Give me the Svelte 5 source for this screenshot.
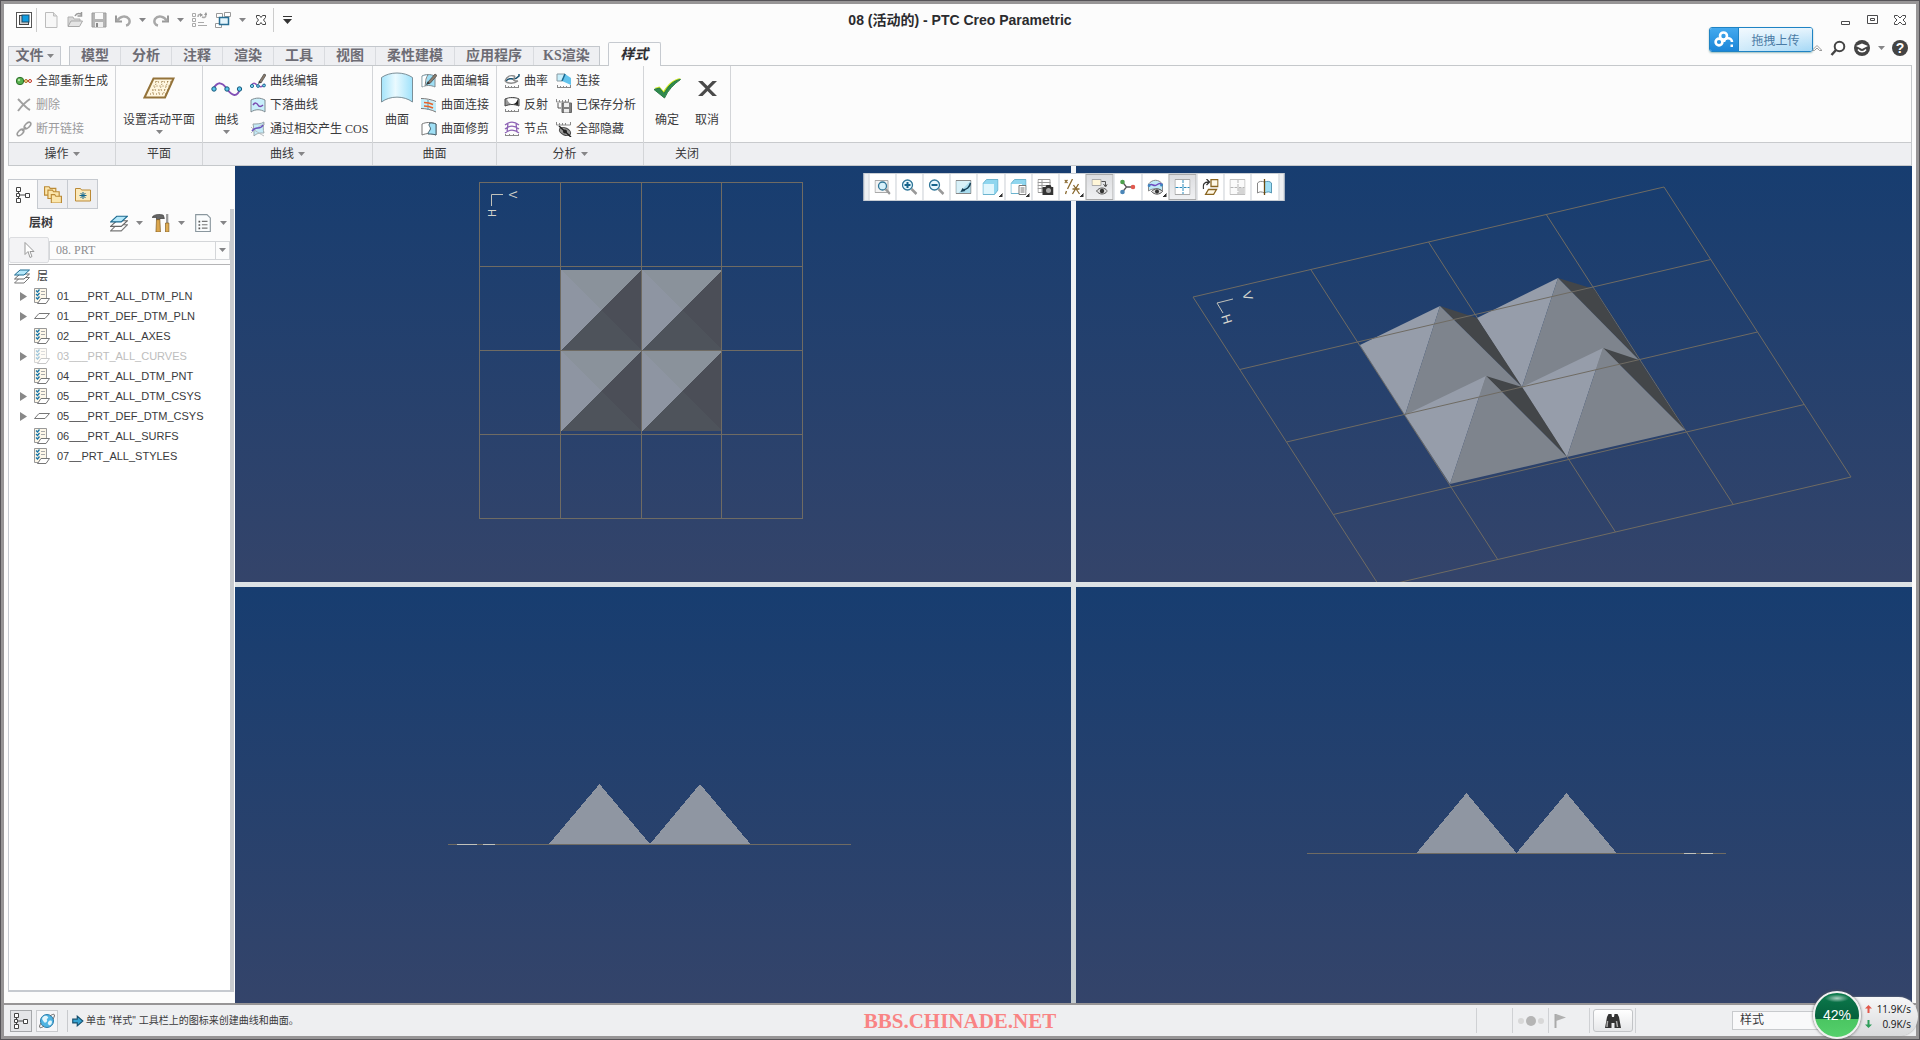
<script>
  const icons = {
    app: '<rect x=".5" y=".5" width="15" height="15" fill="#fff" stroke="#555"/><rect x="3.5" y="3.5" width="9" height="9" fill="#cfcfcf" stroke="#444"/><rect x="6" y="3" width="7" height="7" fill="#0e9be0" stroke="#1a4a66"/>',
    doc: '<path d="M2.500.5h8l3.500 3.500v11.500h-11.500z" fill="#f7f7f7" stroke="#bcbcbc"/><path d="M10.500.5v3.500h3.500" fill="#ddd" stroke="#bcbcbc"/>',
    open: '<path d="M1 14V5h5l1 2h6v2" fill="#d8d8d8" stroke="#b0b0b0"/><path d="M1 14.500 4 9h11.500L12.500 14.500z" fill="#e4e4e4" stroke="#a8a8a8"/><path d="M8 4c1-2 3-3 6-2M14.500 0v4h-4" fill="none" stroke="#999" stroke-width="1.500"/>',
    save: '<path d="M1 1h14v14H1z" fill="#b4b4b4" stroke="#9c9c9c"/><path d="M4 1h8v6H4z" fill="#fafafa"/><path d="M4 10h8v5H4z" fill="#efefef"/><path d="M5 11h2v4H5z" fill="#888"/>',
    undo: '<path d="M1 3.500v6h6" fill="none" stroke="#999" stroke-width="2"/><path d="M2 9C5 4 11 3 14 7c1.500 3 0 6-3 6.500" fill="none" stroke="#a8a8a8" stroke-width="2.500"/>',
    redo: '<path d="M15 3.500v6H9" fill="none" stroke="#999" stroke-width="2"/><path d="M14 9C11 4 5 3 2 7c-1.500 3 0 6 3 6.500" fill="none" stroke="#a8a8a8" stroke-width="2.500"/>',
    regen: '<g fill="none" stroke="#aaa"><path d="M1.500 1.500h3v3h-3zM1.500 6.500h3v3h-3zM1.500 11.500h3v3h-3zM7 10.500h6M7 13.500h9"/><path d="M7 5c0-3 2-3 4-2M15 2c0 4-2 4-4 3" stroke-width="1.500"/></g><path d="M9 1v4l3-2zM13 3l2-3 1.500 3z" fill="#999"/>',
    wins: '<g stroke="#999" fill="#fff"><path d="M1.500 1.500h6v4h-6zM9.500.5h6v4h-6zM.5 11.500h6v4h-6z"/></g><path d="M4.500 5.500h9v7h-9z" fill="#e4f5fc" stroke="#2a6f95" stroke-width="1.500"/>',
    closex: '<path d="M3.500 3.500h3l1.500 2 1.500-2h3v2L10.500 8l2 2.500v2h-3L8 10.500l-1.500 2h-3v-2l2-2.500-2-2.500z" fill="#fff" stroke="#444"/>',
    regenAll: '<path d="M7 8h8" stroke="#888"/><circle cx="4" cy="8" r="3.700" fill="#57b04e" stroke="#2e6e2a"/><circle cx="3" cy="7" r="1.200" fill="#b7e6a8"/><circle cx="10" cy="8" r="1.500" fill="#fbe3a0" stroke="#b06a20"/><circle cx="14" cy="8" r="1.500" fill="#fff" stroke="#c03020"/>',
    del: '<path d="M2 2c4 4 8 9 12 11M14 2C9 5 5 10 2 14" fill="none" stroke="#a0a0a0" stroke-width="2"/>',
    unlink: '<g fill="none" stroke="#9c9c9c" stroke-width="1.600"><ellipse cx="11.500" cy="4.500" rx="4" ry="2.200" transform="rotate(-45 11.500 4.500)"/><ellipse cx="4.500" cy="11.500" rx="4" ry="2.200" transform="rotate(-45 4.500 11.500)"/><path d="m6 10 4-4"/></g>',
    curveEdit: '<path d="M1 13c2-4 4-3 6-1s5 3 8-1" fill="none" stroke="#8a56b8" stroke-width="1.500"/><circle cx="2" cy="13" r="1.600" fill="#7fd0ee" stroke="#1f6f96"/><circle cx="8" cy="13" r="1.400" fill="#7fd0ee" stroke="#1f6f96"/><circle cx="14" cy="12.500" r="1.400" fill="#7fd0ee" stroke="#1f6f96"/><path d="M9 9 14 1l2 1-5 8z" fill="#8b7c6c" stroke="#444" stroke-width=".7"/><path d="M8 11l1-3 2 1.500z" fill="#333"/>',
    drop: '<path d="M1 3c5-2.500 9-2.500 14 0v12c-4-3-10-3-14 0z" fill="#c9effb" stroke="#7e8a90"/><path d="M3 8c2-3 4-2 5 0s3 2 5 0" fill="none" stroke="#7b4bb0" stroke-width="1.500"/>',
    intersect: '<path d="M3 3c4 0 8 0 11-2-1 4-1 8 0 11-4 0-7 0-10 3 0-4 0-8-1-12z" fill="#c4ebf8" stroke="#9aa6ab"/><path d="M1 6c3 3 6 5 13 9M1 12C4 9 10 4 15 3" fill="none" stroke="#b4babd"/><path d="M2 10c2-3 4-3 6-3s4-1 5-3" fill="none" stroke="#6a52c0" stroke-width="1.500"/>',
    surfEdit: '<path d="M1 3c4-2 8-2 13 0v11c-4-2-9-2-13 0z" fill="#9fdff5" stroke="#7e8a90"/><path d="M1.500 3.500c2-1 3-1 5-1L4 13l-2.500.5z" fill="#fff"/><path d="M4 13C5 9 4 6 7 2" fill="none" stroke="#777"/><path d="M7 9 14 1l2 1.500-7 8z" fill="#8b7c6c" stroke="#444" stroke-width=".7"/><path d="M5 12l1.500-3.500L9 10.500z" fill="#333"/>',
    surfConn: '<path d="M0 2c5 0 10 1 15 4v9C10 12 5 11 0 11z" fill="#c3edf9"/><path d="M0 1.500c5 0 10 1 15 3M0 11.500c5 0 10 1 15 3.500" fill="none" stroke="#777"/><path d="M7 3v10" stroke="#5a98b4"/><path d="M3 5.500c3 0 6 .5 9 2M3 9c3 0 6 .5 9 2" fill="none" stroke="#e8632a" stroke-width="1.500"/>',
    surfTrim: '<path d="M1 3c4-2 9-2 14 0v11c-5-2-9-2-14 0z" fill="#fff" stroke="#777"/><path d="M9 2c-3 3 2 4 0 7-1 2-2 2-2 4 3 0 5 0 8 1V3C13 2 11 2 9 2z" fill="#9fdff5" stroke="#47606c"/>',
    curvature: '<path d="M2 8C6 2 9 10 15 3V1" fill="none" stroke="#17506f" stroke-width="1.500"/><path d="M1 8c2-5 6-6 9-5s-5 5 4 5M1 8c3 3 9 3 13 0" fill="none" stroke="#8a8a8a" stroke-width="1.500"/><path d="M1 14.500h14M1.500 12v3M4.500 13v2M7.500 13v2M10.500 13v2M14.500 12v3" stroke="#888"/>',
    reflect: '<path d="M1 2c5-2 10-2 14 0v7c-5-2-9-2-14 0z" fill="#999" stroke="#444"/><path d="M3 2c1 3 3 5 6 5 3 0 4-3 5-5-4-1-8-1-11 0z" fill="#fff"/><path d="M9 7c2 0 4-2 5-5v6z" fill="#222"/><path d="M1 14.500h14M1.500 12v3M4.500 13v2M7.500 13v2M10.500 13v2M14.500 12v3" stroke="#888"/>',
    node: '<path d="M1 4c5-4 9-4 14 0M1 8c5-4 9-4 14 0M1 12c5-4 9-4 14 0M4 2l-1 9M12 2l1 9" fill="none" stroke="#8e63b5" stroke-width="1.300"/><path d="M1 14.500h14M1.500 13v2M5.500 13v2M9.500 13v2M14.500 13v2" stroke="#888"/>',
    connect: '<path d="M1 1h8L6 8H1z" fill="#c9effb" stroke="#8a9aa2"/><path d="M9 1l6 4v7l-9-4z" fill="#62c3ec"/><path d="M9 1 6 8" stroke="#1b6a92" stroke-width="1.500"/><path d="M1 14.500h14M1.500 12v3M4.500 13v2M7.500 13v2M10.500 13v2M14.500 12v3" stroke="#888"/>',
    saved: '<path d="M.5 5h12M.5 2v3M3.500 3v2M6.500 3v2M9.500 3v2M12.500 2v3" stroke="#888"/><path d="M2 6v5h3" fill="none" stroke="#555"/><path d="M6 6h9.500v9.500H6z" fill="#808080" stroke="#666"/><path d="M8 6h5v4H8zM8 12h5v3.500H8z" fill="#eee"/>',
    hideAll: '<path d="M.5 4h14M.5 1v3M3.500 2v2M6.500 2v2M9.500 2v2M14.500 1v3" stroke="#888"/><ellipse cx="9" cy="10.500" rx="6" ry="3.500" fill="#999" stroke="#444" transform="rotate(25 9 10.500)"/><circle cx="9" cy="10.500" r="2" fill="#222"/><path d="m3 5 12 11" stroke="#222" stroke-width="1.500"/>',
    plane: '<path d="M10.500 6.500h20L22 25.500H1.500z" fill="#fff6e0" stroke="#94733a" stroke-width="2"/><path d="M12 10h16M10.500 14h16M9 18h16M7 22h16M14 9 9 23M20 9l-5 14M25 9l-5 14" stroke="#94733a" stroke-dasharray="1 2" fill="none"/>',
    curve: '<path d="M2 17C7 9 11 10 16 17s10 9 13 0" fill="none" stroke="#8350b6" stroke-width="2"/><g fill="#5cc4ea" stroke="#17597b"><circle cx="3" cy="17" r="2.200"/><circle cx="16" cy="17" r="2.200"/><circle cx="28.500" cy="17" r="2.200"/></g>',
    surface: '<defs><linearGradient id="sg"><stop offset="0" stop-color="#a4e4fb"/><stop offset=".45" stop-color="#eafaff"/><stop offset="1" stop-color="#9fe2fb"/></linearGradient></defs><path d="M.5 5.500C9-.5 23-.5 31.500 5.500V30C23 23.500 9 23.500.5 30z" fill="url(#sg)" stroke="#7b8f98"/>',
    ok: '<path d="M3.500 16 8.500 14.500 12.500 19C17 12 22 7 30 6 23 11 17 18 13.500 25.500z" fill="#c9e51f"/><path d="M3 17.500 8.500 16 13 21.500C17 14 22 8.500 29.500 7.500 23 12 17 18 13.500 26z" fill="#2f8a4e" stroke="#2a7a46"/>',
    cancel: '<path d="M7 9h4.500l5 5 5-5H26l-7.500 7.500L26 24h-4.500l-5-5-5 5H7l7.500-7.500z" fill="#4a4a4a"/>',
    tree: '<g fill="#fff" stroke="#444"><path d="M3.500 3v10M3.500 8h8" /><path d="M1.500.5h4v4h-4zM1.500 6.500h3v3h-3zM10.500 6.500h4v4h-4zM1.500 11.500h4v4h-4z"/></g>',
    folders: '<g fill="#fbe6ac" stroke="#bb8a36"><path d="M.5 1.500h4l1 1.500h5v6h-10z"/><path d="M3.500 4.500h4l1 1.500h5v6h-10z"/><path d="M6.500 8.500h3l1 1.500h5v6h-9z"/></g>',
    folderStar: '<path d="M.5 2.500h5l1 1.500h9v11H.5z" fill="#fbe9bb" stroke="#bb8a36"/><path d="M8 6v7M4.500 9.500h7M5.500 7l5 5M10.500 7l-5 5" stroke="#10658f"/>',
    layers: '<path d="M6 9.500h9.500L10 15H.500z" fill="#fff" stroke="#777"/><path d="M6 6h9.500L10 11H.500z" fill="#fff" stroke="#666"/><path d="M6 2h9.500L10 7H.500z" fill="#b5e8fa" stroke="#1d6a90"/>',
    tools: '<path d="M0 3c2-3 7-3 10-2l1 3H7v1H4V3z" fill="#666" stroke="#333" stroke-width=".6"/><path d="M4 5h3l.5 11h-4z" fill="#dba64d" stroke="#7d5a20" stroke-width=".6"/><path d="M12.500 0h2v8h-2z" fill="#999"/><path d="M12 8h3v8h-3z" fill="#e0ad52" stroke="#7d5a20" stroke-width=".6"/>',
    list: '<path d="M1.500.5h10l3 3v12h-13z" fill="#fafcfd" stroke="#8a979e"/><path d="M7 6.500h5M7 9.500h5M7 12.500h5" stroke="#777"/><path d="M4 6h1.500v1.500H4zM4 9h1.500v1.500H4zM4 12h1.500v1.500H4z" fill="#555"/>',
    cursor: '<path d="M4 .5v12l3-3 2 6 2-1-2-5h4z" fill="#fff" stroke="#999"/>',
    layer: '<path d="M.5.5h12v14H.5z" fill="#fdf7e8" stroke="#999"/><path d="M7 3.500h4M7 6.500h4" stroke="#aaa"/><path d="m2 2.500 1.500 1.500 2-2.500M2 6l1.500 1.500 2-2.500M2 9.500 3.500 11l2-2.500" fill="none" stroke="#1473a6" stroke-width="1.300"/><path d="M7 10.500h8.500L12 15.500H3.500z" fill="#fff" stroke="#777"/>',
    flat: '<path d="M5 5.500h10.500L11 10.500H.500z" fill="#fff" stroke="#777"/>',
    refit: '<path d="M.5 1.500h13v12H.5z" fill="#f3f3f3" stroke="#aaa"/><circle cx="8" cy="7" r="4" fill="#d7f1fb" stroke="#2f7698" stroke-width="1.300"/><path d="m11 10 4.500 5" stroke="#999" stroke-width="2.500"/>',
    zin: '<circle cx="6" cy="6" r="5" fill="#e8f8fe" stroke="#2f7698" stroke-width="1.300"/><path d="M3 6h6M6 3v6" stroke="#17648c" stroke-width="2"/><path d="m10 10 5 5" stroke="#999" stroke-width="2.500"/>',
    zout: '<circle cx="6" cy="6" r="5" fill="#e8f8fe" stroke="#2f7698" stroke-width="1.300"/><path d="M3 6h6" stroke="#17648c" stroke-width="2"/><path d="m10 10 5 5" stroke="#999" stroke-width="2.500"/>',
    repaint: '<path d="M.5 1.500h15v13H.5z" fill="#a9dcee" stroke="#888"/><path d="M1 2h14L3 14H1z" fill="#d9f1f9"/><path d="M15 4c-1 5-4 6-7 7" fill="none" stroke="#173f56" stroke-width="1.500"/><path d="M5 13l2-4 3 3z" fill="#173f56"/>',
    cube: '<path d="M.5 4.500 4 .5h11.500V11L12 15.500H.5z" fill="#8fd6ef" stroke="#6cb4cf"/><path d="M1 5h10.500v10H1z" fill="#e0f6fd"/>',
    cubeList: '<path d="M.5 4.500 4 .5h11.500V11L12 14.500H.5z" fill="#8fd6ef" stroke="#6cb4cf"/><path d="M1 5h10.500v9H1z" fill="#fff"/><path d="M8.500 6.500h7v9h-7z" fill="#fff" stroke="#777"/><path d="M10 9h4M10 11h4M10 13h4" stroke="#777"/>',
    camera: '<path d="M.5.5h12v13H.5z" fill="#fff" stroke="#999"/><path d="M0 3.500h13M0 6.500h13M0 9.500h13M4.500 0v13" stroke="#999"/><path d="M5 8h3l1-2h4l1 2h2v8H5z" fill="#333"/><circle cx="11" cy="11.500" r="2.500" fill="#aaa"/>',
    datum: '<path d="M0 1l3 3M3 1 0 4M8 0 3 10M2 12l-1 3M9 6l6 9M14 5 8 15M8 10h7" stroke="#8a6a30" stroke-width="1.300"/>',
    annot: '<path d="M.5.5h9v6h-9z" fill="#fff6d8" stroke="#aaa"/><path d="M10 2.500h4V7M12 5l2 3 2-3" fill="none" stroke="#555"/><path d="M5 12c3-4 8-4 11 0-3 4-8 4-11 0z" fill="#ddd" stroke="#555"/><circle cx="10.500" cy="12" r="2.200" fill="#333"/>',
    spin: '<path d="M3 3l4 5-4 5M7 8h6" fill="none" stroke="#555" stroke-width="1.300"/><circle cx="3" cy="3" r="2.300" fill="#4da04d"/><circle cx="3" cy="13" r="2.300" fill="#4a86b8"/><circle cx="13.500" cy="8" r="2.300" fill="#e05a50"/>',
    styleDisp: '<path d="M1 5c4-5 10-5 14 0v7c-4-3-10-3-14 0z" fill="#bfe9f7" stroke="#888"/><path d="M1 7c3-4 5 1 8-1s4-2 6 0" fill="none" stroke="#6f4bc0" stroke-width="1.500"/><circle cx="1.500" cy="6.500" r="1.500" fill="#3f86c0"/><circle cx="14" cy="6" r="1.500" fill="#3f86c0"/><path d="M4 12.500c3-3.500 8-3.500 11 0-3 3.500-8 3.500-11 0z" fill="#ddd" stroke="#555"/><circle cx="9.500" cy="12.500" r="2" fill="#333"/>',
    four: '<path d="M.5.5h15v15H.5z" fill="#fff" stroke="#a8a8a8"/><path d="M8.500 1v14M1 8.500h14" stroke="#2a8abb" stroke-dasharray="3 1"/>',
    orient: '<path d="M8.500.5h7v7h-7zM6 10.500h8l-3 5H3z" fill="#fff8e6" stroke="#8a6520" stroke-width="1.300"/><path d="M1 10C0 5 2 3 6 3M4 0l3 3-3 3" fill="none" stroke="#333" stroke-width="1.300"/>',
    fourGrey: '<path d="M.5.5h15v15H.5z" fill="#fafafa" stroke="#c0c0c0"/><path d="M9 9h6v6H9z" fill="#d5d5d5"/><path d="M8.500 1v14M1 8.500h14" stroke="#b5b5b5" stroke-dasharray="3 1"/>',
    section: '<path d="M8 3C5 2 3 2 1 4v10c2-1.500 4-1.500 7 0z" fill="#fff" stroke="#888"/><path d="M8 3c3-1 5-1 7 1v10c-2-1.500-4-1.500-7 0z" fill="#9fdff5" stroke="#5a98b4"/><path d="M8 0v16" stroke="#6a4a10" stroke-width="1.300"/>',
    search: '<circle cx="9.500" cy="6.500" r="4.800" fill="#fff" stroke="#444" stroke-width="2"/><path d="M6 10 1.500 15" stroke="#444" stroke-width="2.500"/>',
    learn: '<circle cx="8" cy="8" r="8" fill="#444"/><path d="m2 6 6-2.500L14 6 8 9z" fill="#fff"/><path d="M4 9.500c2 3 6 3 8 0" fill="none" stroke="#fff" stroke-width="1.500"/>',
    globe: '<circle cx="8" cy="8" r="6.500" fill="#4fb4e2" stroke="#2a7cab"/><path d="M4 4c2-2 4-1 5 0s-2 2-1 3-2 4-3 2-3-3-1-5zM10 8c2-1 3 0 3 1s-1 4-3 3-1-3 0-4z" fill="#e3f5fb"/><path d="M11 3c4-3 6-2 3 3M5 13c-4 3-6 2-3-3" fill="none" stroke="#666"/>',
    arrow: '<path d="M1 5.500h6V1.500l7.500 6.500L7 14.500v-4H1z" fill="#36a4d2" stroke="#17506f" stroke-width="1.500"/>',
    flag: '<path d="M2.500 1v14" stroke="#aaa" stroke-width="2"/><path d="M3 1l10 3.500L3 8z" fill="#b0b0b0"/>',
    binoc: '<path d="M2 4 3.500 1h3L7 4h2l.5-3h3L14 4l2 11h-6.500V10h-3v5H0z" fill="#333"/><path d="M2.500 8 2 14M11.500 8l1 6" stroke="#aaa" stroke-width="1.500"/>',
    cloud: '<g fill="none" stroke="#fff" stroke-width="2.600"><circle cx="5" cy="11" r="3.400"/><circle cx="9.500" cy="5" r="3.500"/><path d="M10 11c0-5 8-5 8 0"/></g><path d="M16.500 13.500h2.500v2.500h-2.500z" fill="#fff"/>'
  };

  const tabs = ['模型', '分析', '注释', '渲染', '工具', '视图', '柔性建模', '应用程序', 'KS渲染'];
  const groups = [
    { title: '操作', menu: true, kind: 'ops', big: [], cols: [[['regenAll', '全部重新生成'], ['del', '删除', true], ['unlink', '断开链接', true]]] },
    { title: '平面', kind: 'plane', big: [['plane', '设置活动平面', true]], cols: [] },
    { title: '曲线', menu: true, kind: 'curve', big: [['curve', '曲线', true]], cols: [[['curveEdit', '曲线编辑'], ['drop', '下落曲线'], ['intersect', '通过相交产生 COS']]] },
    { title: '曲面', kind: 'surf', big: [['surface', '曲面']], cols: [[['surfEdit', '曲面编辑'], ['surfConn', '曲面连接'], ['surfTrim', '曲面修剪']]] },
    { title: '分析', menu: true, kind: 'anal', big: [], cols: [[['curvature', '曲率'], ['reflect', '反射'], ['node', '节点']], [['connect', '连接'], ['saved', '已保存分析'], ['hideAll', '全部隐藏']]] },
    { title: '关闭', kind: 'close', big: [['ok', '确定'], ['cancel', '取消']], cols: [] }
  ];
  const layers = [
    ['01___PRT_ALL_DTM_PLN', 'layer', true],
    ['01___PRT_DEF_DTM_PLN', 'flat', true],
    ['02___PRT_ALL_AXES', 'layer', false],
    ['03___PRT_ALL_CURVES', 'layer', true, true],
    ['04___PRT_ALL_DTM_PNT', 'layer', false],
    ['05___PRT_ALL_DTM_CSYS', 'layer', true],
    ['05___PRT_DEF_DTM_CSYS', 'flat', true],
    ['06___PRT_ALL_SURFS', 'layer', false],
    ['07__PRT_ALL_STYLES', 'layer', false]
  ];
  const viewTools = [
    ['refit', '重新调整'], ['zin', '放大'], ['zout', '缩小'], ['repaint', '重画'], ['cube', '显示样式', 'm'],
    ['cubeList', '已保存方向', 'm'], ['camera', '视图管理器'], ['datum', '基准显示', 'm'], ['annot', '注释显示', 'on'],
    ['spin', '旋转中心'], ['styleDisp', '样式显示', 'm'], ['four', '显示所有视图', 'on'], ['orient', '活动平面方向'],
    ['fourGrey', '下一个视图'], ['section', '截面']
  ];

  // Top view: four square pyramids of 80 units
  const squares = [[326, 104], [407, 104], [326, 185], [407, 185]];

  // Oblique view: grid corners and pyramid vertices [nw, ne, sw, se, apex]
  const A = [117, 131], U = [471, -110], V = [187, 290];
  const at = (u, v) => [A[0] + U[0] * u + V[0] * v, A[1] + U[1] * u + V[1] * v];
  const steps = [0, 0.25, 0.5, 0.75, 1];
  const seg = (p, q) => `M${p[0]} ${p[1]}L${q[0]} ${q[1]}`;
  const rowLines = steps.map((s) => seg(at(0, s), at(1, s)));
  const colLines = steps.map((s) => seg(at(s, 0), at(s, 1)));
  const p = {
    a: [284, 179], b: [401, 152], c: [518, 123], d: [329, 249], e: [446, 221], f: [563, 194],
    g: [374, 318], h: [491, 291], i: [609, 264], s: [364, 140], t: [482, 112], u: [410, 210], v: [527, 182]
  };
  const solids = ['bcef t', 'abde s', 'efhi v', 'degh u'].map((k) => {
    const [nw, ne, sw, se] = k.slice(0, 4).split('').map((n) => p[n]);
    const top = p[k[5]];
    const poly = (...q) => q.map((n) => n.join(',')).join(' ');
    return { left: poly(nw, top, sw), front: poly(sw, top, se), right: poly(ne, top, se) };
  });
</script>

{#snippet icon(name, cls = 'i16')}
  <svg class={cls} viewBox={cls === 'i32' ? '0 0 32 32' : '0 0 16 16'} aria-hidden="true">{@html icons[name]}</svg>
{/snippet}

{#snippet caret()}
  <svg class="caret" viewBox="0 0 7 4" aria-hidden="true"><path d="M0 0h7L3.500 4z" /></svg>
{/snippet}

<div class="window">
  <header>
    <div class="lead">
      <div class="qat">
        <button class="app" aria-label="应用程序">{@render icon('app')}</button>
        <div class="quick">
          <button aria-label="新建">{@render icon('doc')}</button>
          <button aria-label="打开">{@render icon('open')}</button>
          <button aria-label="保存">{@render icon('save')}</button>
          <button aria-label="撤消">{@render icon('undo')}</button>
          <button class="mini" aria-label="撤消列表">{@render caret()}</button>
          <button aria-label="重做">{@render icon('redo')}</button>
          <button class="mini" aria-label="重做列表">{@render caret()}</button>
          <button aria-label="重新生成">{@render icon('regen')}</button>
          <button aria-label="窗口">{@render icon('wins')}</button>
          <button class="mini" aria-label="窗口列表">{@render caret()}</button>
          <button aria-label="关闭">{@render icon('closex')}</button>
        </div>
        <button class="custom" aria-label="自定义快速访问工具栏">
          <svg viewBox="0 0 9 8" aria-hidden="true"><path d="M0 .5h9" stroke="#333" /><path d="M0 3h9L4.500 8z" fill="#333" /></svg>
        </button>
      </div>
      <nav class="tabs">
        <button class="file">文件{@render caret()}</button>
        <div class="strip">
          {#each tabs as t}<button>{t}</button>{/each}
        </div>
        <button class="active">样式</button>
      </nav>
    </div>
    <h1>08 (活动的) - PTC Creo Parametric</h1>
    <div class="trail">
      <div class="controls">
        <button aria-label="最小化"><svg viewBox="0 0 12 12"><path d="M1.500 7.500h8v3h-8z" /></svg></button>
        <button aria-label="最大化"><svg viewBox="0 0 12 12"><path d="M.5 1.500h10v8H.5zM3.500 4.500h4v2h-4z" /></svg></button>
        <button aria-label="关闭窗口"><svg viewBox="0 0 12 12"><path d="M.5 1.500h3L6 4l2.500-2.500h3v2L9 6l2.500 2.500v2h-3L6 8l-2.500 2.500h-3v-2L3 6 .5 3.500z" /></svg></button>
      </div>
      <div class="helpers">
        <button class="chev" aria-label="折叠功能区"><svg viewBox="1 0 10 8"><path d="M1 6.500 6 1.500l5 5H8.500L6 4 3.500 6.500z" /></svg></button>
        <button aria-label="搜索">{@render icon('search')}</button>
        <button aria-label="学习">{@render icon('learn')}</button>
        <button class="mini" aria-label="学习列表">{@render caret()}</button>
        <button class="help" aria-label="帮助">?</button>
      </div>
      <button class="upload">
        <span class="cloud"><svg viewBox="0 0 20 18" aria-hidden="true">{@html icons.cloud}</svg></span>
        <span class="uptext">拖拽上传</span>
      </button>
    </div>
  </header>

  <section class="ribbon">
    {#each groups as g}
      <div class="group {g.kind}">
        <div class="tools">
          {#each g.big as [ic, label, menu]}
            <button class="big">
              {@render icon(ic, 'i32')}
              <span>{label}</span>
              {#if menu}{@render caret()}{/if}
            </button>
          {/each}
          {#each g.cols as col}
            <div class="col">
              {#each col as [ic, label, off]}
                <button class="small" disabled={off}>{@render icon(ic)}<span>{label}</span></button>
              {/each}
            </div>
          {/each}
        </div>
        <div class="caption">{g.title}{#if g.menu}{@render caret()}{/if}</div>
      </div>
    {/each}
    <div class="group rest"><div class="tools"></div><div class="caption"></div></div>
  </section>

  <main>
    <aside>
      <div class="sidetabs">
        <button class="on" aria-label="模型树">{@render icon('tree')}</button>
        <button aria-label="文件夹浏览器">{@render icon('folders', 'i18')}</button>
        <button aria-label="收藏夹">{@render icon('folderStar')}</button>
      </div>
      <div class="panel">
        <div class="panelhead">
          <h2>层树</h2>
          <button aria-label="层">{@render icon('layers', 'i18')}{@render caret()}</button>
          <button aria-label="设置">{@render icon('tools', 'i18')}{@render caret()}</button>
          <button aria-label="显示">{@render icon('list', 'i18')}{@render caret()}</button>
        </div>
        <div class="pick">
          <button disabled aria-label="选择">{@render icon('cursor')}</button>
          <div class="combo">
            <select disabled aria-label="模型"><option>08. PRT</option></select>
            <span class="drop">{@render caret()}</span>
          </div>
        </div>
        <ul class="tree">
          <li class="root">{@render icon('layers')}<span>层</span></li>
          {#each layers as [name, ic, expand, off]}
            <li class:off>
              <span class="twist">{#if expand}<svg viewBox="0 0 7 9" aria-hidden="true"><path d="M0 0l7 4.500L0 9z" fill="#888" /></svg>{/if}</span>
              {@render icon(ic)}
              <span class="name">{name}</span>
            </li>
          {/each}
        </ul>
      </div>
    </aside>

    <div class="canvas">
      <div class="view">
        <svg viewBox="0 0 836 416" role="img" aria-label="俯视图">
          {#each squares as [x, y]}
            <g shape-rendering="crispEdges">
              <polygon points="{x},{y} {x + 80},{y} {x + 40},{y + 40}" fill="#8a929b" />
              <polygon points="{x},{y} {x + 40},{y + 40} {x},{y + 80}" fill="#8e95a2" />
              <polygon points="{x + 80},{y} {x + 80},{y + 80} {x + 40},{y + 40}" fill="#4b4e57" />
              <polygon points="{x},{y + 80} {x + 40},{y + 40} {x + 80},{y + 80}" fill="#4e535b" />
            </g>
          {/each}
          <path class="grid" d="M244.500 16V353M325.500 16V353M406.500 16V353M486.500 16V353M567.500 16V353M244 16.500H568M244 100.500H568M244 184.500H568M244 268.500H568M244 352.500H568" />
          <path class="axis" d="M256.500 40V28.500H268" />
          <text transform="translate(274 25) rotate(90)">V</text>
          <text transform="translate(253 43) rotate(90)">H</text>
        </svg>
      </div>
      <div class="view">
        <svg viewBox="0 0 836 416" role="img" aria-label="标准方向">
          {#each colLines as d}<path class="grid" {d} />{/each}
          {#each solids as s}
            <polygon points={s.left} fill="#969daa" />
            <polygon points={s.right} fill="#434649" />
            <polygon points={s.front} fill="#7e848d" />
          {/each}
          {#each rowLines as d}<path class="grid" {d} />{/each}
          <path class="axis" d="M157 133 141 137l6 10" />
          <text class="lg" transform="translate(166 127) rotate(72)">V</text>
          <text class="lg" transform="translate(145 150) rotate(72)">H</text>
        </svg>
      </div>
      <div class="view">
        <svg viewBox="0 0 836 416" role="img" aria-label="前视图">
          <path d="M314 257 364.500 197 415 257 465 197 515.500 257z" fill="#8f96a2" shape-rendering="crispEdges" />
          <path class="grid" d="M213 257.500H616" />
          <path class="axis" d="M222 257.500h20M248 257.500h12" />
        </svg>
      </div>
      <div class="view">
        <svg viewBox="0 0 836 416" role="img" aria-label="右视图">
          <path d="M340.500 266 390.500 206 440.500 266 490.500 206 540.500 266z" fill="#8f96a2" shape-rendering="crispEdges" />
          <path class="grid" d="M231 266.500H650" />
          <path class="axis" d="M608 266.500h12M625 266.500h12" />
        </svg>
      </div>
      <div class="viewbar">
        {#each viewTools as [ic, label, mode]}
          <button class:on={mode === 'on'} class:menu={mode === 'm'} aria-label={label}>{@render icon(ic)}</button>
        {/each}
      </div>
    </div>
  </main>

  <footer>
    <button class="sq pressed" aria-label="切换树">{@render icon('tree')}</button>
    <button class="sq" aria-label="浏览器">{@render icon('globe')}</button>
    <p class="msg">{@render icon('arrow', 'i12')}<span>单击 "样式" 工具栏上的图标来创建曲线和曲面。</span></p>
    <div class="brand">BBS.CHINADE.NET</div>
    <div class="cells">
      <span class="cell"></span>
      <span class="cell"><svg class="dots" viewBox="0 0 26 10" aria-hidden="true"><circle cx="3" cy="5" r="3" fill="#d8d8d8" /><circle cx="13" cy="5" r="5" fill="#b5b5b5" /><circle cx="23" cy="5" r="3" fill="#d8d8d8" /></svg></span>
      <span class="cell flag">{@render icon('flag')}</span>
      <span class="cell find"><button aria-label="查找">{@render icon('binoc')}</button></span>
      <span class="cell end"></span>
      <select class="filter" aria-label="过滤器"><option>样式</option></select>
    </div>
    <div class="speed">
      <div class="rates">
        <span><b class="up"><svg viewBox="0 0 7 8"><path d="M3.500 0 7 3.500H4.500V8h-2V3.500H0z" /></svg></b>11.9K/s</span>
        <span><b class="down"><svg viewBox="0 0 7 8"><path d="M3.500 8 7 4.500H4.500V0h-2v4.500H0z" /></svg></b>0.9K/s</span>
      </div>
      <div class="ball">42%</div>
    </div>
  </footer>
</div>

<style>
  :global(body) { margin: 0; }
  .window, .window * { box-sizing: border-box; }
  .window {
    display: flex; flex-direction: column; min-height: 100vh; overflow: hidden;
    background: #fcfcfc; border: 1px solid #565458; box-shadow: inset 0 0 0 3px #979596; padding: 3px;
    font: 12px/18px "Liberation Sans", "Noto Sans CJK SC", sans-serif; color: #3a3a3c;
  }
  button { font: inherit; color: inherit; background: none; border: 0; padding: 0; margin: 0; display: flex; align-items: center; }
  svg { display: block; flex: none; }
  .i12 { width: 12px; height: 12px; }
  .i16 { width: 16px; height: 16px; }
  .i18 { width: 18px; height: 18px; }
  .i32 { width: 32px; height: 32px; }
  .caret { width: 7px; height: 4px; fill: #858587; }

  header { display: grid; grid-template: 61px / 1fr auto 1fr; height: 61px; flex: none; position: relative; z-index: 1; }
  h1 { margin: 0; padding-top: 7px; font: bold 14px/18px "Liberation Sans", "Noto Sans CJK SC", sans-serif; color: #2b2b2e; white-space: nowrap; }
  .lead { display: flex; flex-direction: column; justify-content: space-between; }
  .qat { display: flex; align-items: center; height: 32px; padding-left: 12px; }
  .app, .quick { height: 24px; }
  .app { padding-right: 4px; border-right: 1px solid #ccc; }
  .quick { display: flex; align-items: center; gap: 8px; padding: 0 4px 0 6px; border-right: 1px solid #ccc; }
  .mini { width: 6px; }
  .custom { padding-left: 9px; }
  .custom svg { width: 9px; height: 8px; }
  .tabs { display: flex; align-items: flex-end; padding-left: 4px; gap: 8px; height: 24px; margin-bottom: -1px; }
  .tabs button { height: 18px; color: #6d6c74; font: bold 14px/16px "Liberation Serif", "Noto Sans CJK SC", serif; justify-content: center; white-space: nowrap; }
  .tabs .file { width: 53px; height: 19px; gap: 3px; background: #eeeff2; border: 1px solid #c6cad0; border-bottom: 0; }
  .tabs .file, .strip { margin-bottom: 1px; }
  .strip { display: flex; background: #eeeff2; border: 1px solid #c3c7cc; border-bottom: 0; }
  .strip button { padding: 0 11px; border-left: 1px solid #d9dbdf; }
  .strip button:first-child { border-left: 0; }
  .strip button:last-child { padding: 0 9px; }
  .tabs .active { width: 53px; height: 24px; color: #2f2f33; font-style: italic; background: #fcfcfc; border: 1px solid #c6cad0; border-bottom: 0; border-radius: 2px 2px 0 0; }

  .trail { display: flex; flex-direction: column; align-items: flex-end; position: relative; }
  .controls { display: flex; gap: 15px; height: 32px; align-items: center; padding-right: 10px; }
  .controls svg { width: 12px; height: 12px; fill: #fff; stroke: #4a4a4c; }
  .helpers { display: flex; align-items: center; height: 24px; padding-right: 8px; gap: 8px; }
  .chev svg { width: 10px; height: 8px; fill: #fff; stroke: #999; }
  .help { width: 16px; height: 16px; border-radius: 8px; background: #444; color: #fff; font: bold 14px/16px "Liberation Sans", sans-serif; justify-content: center; }
  .upload { position: absolute; right: 103px; top: 23px; width: 104px; height: 25px; border: 1px solid #1f83c4; border-radius: 3px; overflow: hidden; box-shadow: 0 1px 2px #9bb; align-items: stretch; color: #4a7ba5; }
  .cloud { width: 29px; background: linear-gradient(#44a9ee, #1b86d8); display: flex; align-items: center; justify-content: center; border-right: 1px solid #1f83c4; }
  .cloud svg { width: 20px; height: 18px; }
  .uptext { flex: 1; line-height: 26px; background: linear-gradient(90deg, #ffffff77, #ffffff00), linear-gradient(#e6f4fd, #a5d8f6); text-align: center; }

  .ribbon { display: flex; flex: none; margin: 0 4px; border: 1px solid #c5c8cb; }
  .group { display: flex; flex-direction: column; border-right: 1px solid #d3d5d8; }
  .ops { width: 107px; }
  .plane, .close { width: 87px; }
  .curve { width: 170px; }
  .surf { width: 124px; }
  .anal { width: 147px; }
  .rest { flex: 1; border-right: 0; }
  .tools { display: flex; height: 77px; border-bottom: 1px solid #c8cacd; }
  .ops .tools, .anal .tools { padding-left: 7px; }
  .plane .tools, .close .tools { justify-content: center; }
  .caption { display: flex; align-items: center; justify-content: center; gap: 4px; height: 22px; background: #eeeff2; }
  .col { padding-top: 3px; }
  .anal .col:first-child { width: 52px; }
  .small { height: 24px; gap: 4px; font-family: "Liberation Serif", "Noto Sans CJK SC", serif; white-space: nowrap; }
  .small:disabled { color: #9b9b9d; }
  .big { flex-direction: column; width: 48px; padding-top: 6px; white-space: nowrap; }
  .curve .big { width: 47px; }
  .close .big { width: 40px; }
  .big span { margin-top: 7px; }
  .big .caret { margin-top: 1px; }

  main { flex: 1; display: flex; margin: 0 4px; }
  aside { flex: none; width: 226px; margin-right: 1px; padding: 13px 0 11px; display: flex; flex-direction: column; }
  .sidetabs { display: flex; }
  .sidetabs button { width: 30px; height: 30px; justify-content: center; background: #eeeff2; border: 1px solid #c6cad0; border-width: 1px 1px 1px 0; }
  .sidetabs .on { background: #fcfcfc; border-width: 1px 1px 0 1px; }
  .panel { flex: 1; display: flex; flex-direction: column; border: 1px solid #c6cad0; border-top: 0; border-right: 4px solid #c8cbcf; border-bottom-width: 2px; }
  .panelhead { display: flex; align-items: center; height: 28px; padding: 0 3px 0 20px; gap: 9px; }
  .panelhead button { gap: 8px; }
  h2 { margin: 0 auto 0 0; font-size: 12px; line-height: 18px; }
  .pick { display: flex; align-items: center; height: 28px; border-bottom: 1px solid #b4b4b6; padding-bottom: 1px; }
  .pick > button { width: 40px; height: 26px; justify-content: center; background: #f3f3f5; border: 1px solid #dcdde0; border-radius: 2px; }
  .combo { flex: 1; display: flex; height: 19px; border: 1px solid #d4d6d9; }
  .combo select { flex: 1; appearance: none; border: 0; background: none; padding: 0 6px; font: 12px/16px "Liberation Serif", serif; color: #8d8d90; opacity: 1; }
  .drop { width: 14px; display: flex; align-items: center; justify-content: center; border-left: 1px solid #d4d6d9; }
  .tree { flex: 1; list-style: none; margin: 0; padding: 1px 0; background: #fff; }
  .tree li { display: flex; align-items: center; height: 20px; padding-left: 11px; font-size: 11px; }
  .tree .root { padding-left: 5px; gap: 7px; }
  .twist { width: 14px; }
  .twist svg { width: 7px; height: 9px; }
  .name { padding-left: 7px; color: #3a3a3c; }
  .off .name { color: #bdbdbd; }
  .off .i16 { opacity: 0.4; }

  .canvas { flex: 1; min-width: 0; position: relative; display: grid; grid-template: 1fr 1fr / 1fr 1fr; gap: 5px; background: linear-gradient(#f6f8fa, #c4ccd0); }
  .view { contain: size; min-height: 320px; background: linear-gradient(#173d70, #34446a); overflow: hidden; }
  .view svg { width: 100%; height: 100%; }
  .grid { fill: none; stroke: #6f6b63; stroke-width: 1; }
  .axis { fill: none; stroke: #c2c2ba; stroke-width: 1; }
  .view text { font: 11px "Liberation Sans", sans-serif; fill: #d4d4cc; }
  .view .lg { font-size: 13px; }
  .viewbar { position: absolute; top: 7px; left: 50%; transform: translateX(-50%); display: flex; width: 421px; height: 28px; padding: 0 4px; background: #eef0f2; border: 1px solid #c9ced4; }
  .viewbar button { flex: 1; position: relative; justify-content: center; background: #fff; border-left: 1px solid #ccd0d5; }
  .viewbar button:last-child { border-right: 1px solid #ccd0d5; }
  .viewbar .on { background: linear-gradient(#dcdde0, #f0f1f3); border: 1px solid #aaa; }
  .menu::after { content: ""; position: absolute; right: 2px; bottom: 3px; width: 4px; height: 4px; background: linear-gradient(135deg, transparent 50%, #333 50%); }

  footer { position: relative; flex: none; display: flex; align-items: center; height: 33px; background: #eeeff1; border-top: 2px solid #979596; padding: 0 8px 0 6px; }
  .sq { width: 22px; height: 22px; margin-right: 4px; justify-content: center; border: 1px solid #c9cbce; background: #f6f6f8; }
  .pressed { background: #e4e5e8; border-color: #a5a7aa; }
  .msg { display: flex; align-items: center; gap: 2px; margin: 0 0 0 5px; padding-left: 4px; border-left: 1px solid #c8cacd; height: 22px; font-size: 10px; white-space: nowrap; }
  .brand { position: absolute; left: 50%; transform: translateX(-50%); font: bold 21px/24px "Liberation Serif", serif; color: #f98484; }
  .cells { display: flex; align-items: center; margin-left: auto; }
  .cell { display: flex; align-items: center; justify-content: center; width: 36px; height: 25px; border-left: 1px solid #cfd1d4; }
  .dots { width: 26px; height: 10px; }
  .flag { width: 41px; justify-content: flex-start; padding-left: 4px; }
  .find { width: 46px; }
  .find button { width: 40px; height: 23px; justify-content: center; border: 1px solid #c2c4c7; border-radius: 3px; background: linear-gradient(#fff, #e6e7e9); }
  .end { width: 97px; }
  .filter { appearance: none; width: 176px; height: 19px; border: 1px solid #c8cacd; background: #f9f9fa; border-radius: 0; font: 12px/17px "Liberation Sans", "Noto Sans CJK SC", sans-serif; color: #3a3a3c; padding: 0 7px; }
  .speed { position: absolute; right: -2px; bottom: 0; }
  .rates { width: 81px; height: 39px; border-radius: 0 20px 20px 0; background: linear-gradient(#f7f7f8, #d9dadc); display: flex; flex-direction: column; justify-content: center; align-items: flex-end; padding-right: 7px; font: 10px/15px "Open Sans", sans-serif; color: #111; box-shadow: 0 0 2px #888; }
  .rates span { display: flex; align-items: center; justify-content: space-between; width: 46px; }
  .rates svg { width: 7px; height: 8px; }
  .up { fill: #e2574a; }
  .down { fill: #2e9e5a; }
  .ball { position: absolute; left: -24px; top: -6px; width: 48px; height: 48px; border-radius: 24px; border: 2px solid #f1f1f1; background: radial-gradient(ellipse 12px 4px at 50% 12%, #ffffffaa, #ffffff00), linear-gradient(#0c7a4c 0, #05603c 58%, #4ac561 58%, #55d06c); box-shadow: 0 0 3px #555; color: #fff; font: 14px/44px "Liberation Sans", sans-serif; text-align: center; }
</style>
